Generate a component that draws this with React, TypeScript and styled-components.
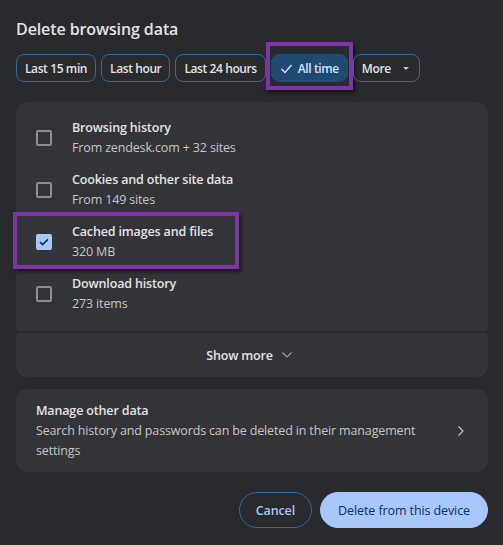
import React, { useState } from 'react'
import styled, { createGlobalStyle } from 'styled-components'

const GlobalStyle = createGlobalStyle`
  html, body {
    margin: 0;
    padding: 0;
    background: #292a2d;
  }
  body {
    font-family: 'Open Sans', 'Noto Sans', sans-serif;
    color: #e3e3e3;
  }
`

const Dialog = styled.div`
  width: 503px;
  height: 545px;
  box-sizing: border-box;
  padding: 18px 15px 0 16px;
  background: #292a2d;
`

const Title = styled.h1`
  margin: 0;
  font-size: 16px;
  font-weight: 600;
  line-height: 22px;
  color: #e3e3e3;
  letter-spacing: -0.1px;
`

const ChipRow = styled.div`
  display: flex;
  gap: 5px;
  margin-top: 14px;
`

const Chip = styled.button<{ $selected?: boolean }>`
  position: relative;
  display: flex;
  align-items: center;
  gap: 5px;
  height: 28px;
  box-sizing: border-box;
  padding: 0 8px;
  border-radius: 8px;
  border: 1px solid ${p => (p.$selected ? '#1f4a72' : '#2f6aa3')};
  background: ${p => (p.$selected ? '#1f4a72' : 'transparent')};
  color: ${p => (p.$selected ? '#d3e3fd' : '#e3e3e3')};
  font-family: inherit;
  font-size: 12px;
  font-weight: 600;
  letter-spacing: -0.4px;
  cursor: pointer;
`

const Highlight = styled.div<{ $top: number; $right: number; $bottom: number; $left: number }>`
  position: absolute;
  top: ${p => p.$top}px;
  right: ${p => p.$right}px;
  bottom: ${p => p.$bottom}px;
  left: ${p => p.$left}px;
  border: 4px solid #7a36a3;
  box-shadow: 2px 3px 4px rgba(0, 0, 0, 0.55);
  pointer-events: none;
`

const Caret = styled.span`
  width: 0;
  height: 0;
  margin: 0 2px 0 7px;
  border-left: 3.5px solid transparent;
  border-right: 3.5px solid transparent;
  border-top: 3.5px solid #c4c7c5;
`

const ListCard = styled.div`
  margin-top: 20px;
  background: #333438;
  border-radius: 12px 12px 4px 4px;
  padding: 10px 0 11px;
`

const Row = styled.label`
  position: relative;
  display: flex;
  align-items: center;
  height: 52px;
  padding-left: 20px;
  cursor: pointer;
`

const Box = styled.span<{ $checked: boolean }>`
  display: flex;
  align-items: center;
  justify-content: center;
  width: 16px;
  height: 16px;
  box-sizing: border-box;
  border-radius: 2px;
  border: 2px solid ${p => (p.$checked ? '#a8c7fa' : '#8e918f')};
  background: ${p => (p.$checked ? '#a8c7fa' : 'transparent')};
  flex-shrink: 0;
`

const RowText = styled.div`
  margin-left: 20px;
  display: flex;
  flex-direction: column;
`

const RowTitle = styled.span`
  font-size: 12.5px;
  font-weight: 600;
  line-height: 20px;
  color: #e3e3e3;
  letter-spacing: -0.15px;
`

const RowSub = styled.span`
  font-size: 12.5px;
  line-height: 20px;
  color: #c4c7c5;
  letter-spacing: -0.15px;
`

const ShowMore = styled.button`
  display: flex;
  align-items: center;
  justify-content: center;
  gap: 9px;
  width: 100%;
  height: 44px;
  margin-top: 2px;
  padding: 0 6px 0 0;
  border: none;
  background: #333438;
  border-radius: 4px 4px 12px 12px;
  color: #e3e3e3;
  font-family: inherit;
  font-size: 12.5px;
  font-weight: 600;
  letter-spacing: -0.15px;
  cursor: pointer;
`

const ManageCard = styled.div`
  display: flex;
  align-items: center;
  margin-top: 12px;
  height: 83px;
  box-sizing: border-box;
  padding: 0 24px 0 20px;
  background: #333438;
  border-radius: 12px;
  cursor: pointer;
`

const ManageText = styled.div`
  flex: 1;
  display: flex;
  flex-direction: column;
  padding-right: 18px;
`

const Footer = styled.div`
  display: flex;
  justify-content: flex-end;
  gap: 8px;
  margin-top: 20px;
`

const PillButton = styled.button<{ $primary?: boolean }>`
  height: 36px;
  box-sizing: border-box;
  padding: 0 ${p => (p.$primary ? 17 : 16)}px;
  border-radius: 18px;
  border: 1px solid ${p => (p.$primary ? '#a8c7fa' : '#2f6aa3')};
  background: ${p => (p.$primary ? '#a8c7fa' : 'transparent')};
  color: ${p => (p.$primary ? '#062e6f' : '#a8c7fa')};
  font-family: inherit;
  font-size: 12.5px;
  font-weight: ${p => (p.$primary ? 500 : 600)};
  letter-spacing: -0.1px;
  cursor: pointer;
`

const ranges = ['Last 15 min', 'Last hour', 'Last 24 hours', 'All time']

const items = [
  { title: 'Browsing history', sub: 'From zendesk.com + 32 sites' },
  { title: 'Cookies and other site data', sub: 'From 149 sites' },
  { title: 'Cached images and files', sub: '320 MB' },
  { title: 'Download history', sub: '273 items' },
]

export default function App() {
  const [range, setRange] = useState('All time')
  const [checked, setChecked] = useState([false, false, true, false])

  const toggle = (i: number) => setChecked(c => c.map((v, j) => (j === i ? !v : v)))

  return (
    <Dialog>
      <GlobalStyle />
      <Title>Delete browsing data</Title>
      <ChipRow>
        {ranges.map(r => (
          <Chip key={r} $selected={r === range} onClick={() => setRange(r)}>
            {r === range && (
              <svg width="13" height="13" viewBox="0 0 13 13">
                <path d="M1.5 7 L5 10.5 L11.5 3" fill="none" stroke="#d3e3fd" strokeWidth="1.4" />
              </svg>
            )}
            {r}
            {r === 'All time' && <Highlight $top={-13} $right={-6} $bottom={-9} $left={-6} />}
          </Chip>
        ))}
        <Chip>
          More
          <Caret />
        </Chip>
      </ChipRow>

      <ListCard>
        {items.map((it, i) => (
          <Row key={it.title} onClick={() => toggle(i)}>
            <Box $checked={checked[i]}>
              {checked[i] && (
                <svg width="12" height="12" viewBox="0 0 12 12">
                  <path d="M2 6.2 L4.6 8.6 L10 3.4" fill="none" stroke="#062e6f" strokeWidth="1.6" />
                </svg>
              )}
            </Box>
            <RowText>
              <RowTitle>{it.title}</RowTitle>
              <RowSub>{it.sub}</RowSub>
            </RowText>
            {i === 2 && <Highlight $top={-4} $right={249} $bottom={-1} $left={-3} />}
          </Row>
        ))}
      </ListCard>
      <ShowMore>
        Show more
        <svg width="10" height="6" viewBox="0 0 10 6">
          <path d="M0.5 0.5 L5 5 L9.5 0.5" fill="none" stroke="#9aa0a6" strokeWidth="1.1" />
        </svg>
      </ShowMore>

      <ManageCard>
        <ManageText>
          <RowTitle>Manage other data</RowTitle>
          <RowSub>Search history and passwords can be deleted in their management settings</RowSub>
        </ManageText>
        <svg width="6" height="10" viewBox="0 0 6 10">
          <path d="M0.5 0.5 L5 5 L0.5 9.5" fill="none" stroke="#c4c7c5" strokeWidth="1.2" />
        </svg>
      </ManageCard>

      <Footer>
        <PillButton>Cancel</PillButton>
        <PillButton $primary>Delete from this device</PillButton>
      </Footer>
    </Dialog>
  )
}
